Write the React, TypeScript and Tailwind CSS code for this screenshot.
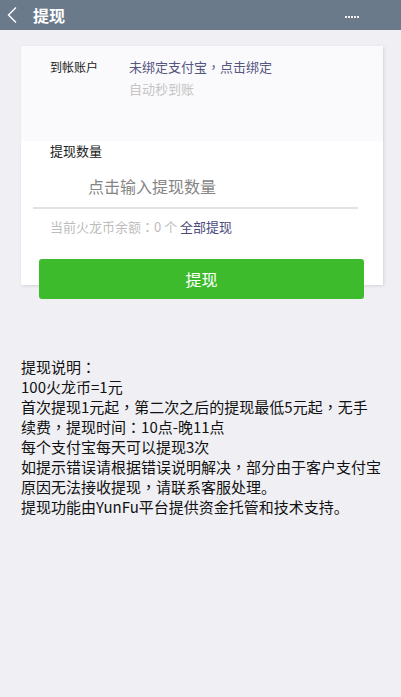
import { useState } from 'react';

// full-width punctuation sits centred in the reference, as in the TC font
function P({ children }: { children: string }) {
  return <span className="font-['Noto_Sans_CJK_TC',sans-serif]">{children}</span>;
}

export default function App() {
  const [amount, setAmount] = useState('');

  return (
    <div className="min-h-[697px] bg-[#efeff4] font-['Noto_Sans_CJK_SC','Noto_Sans',sans-serif] text-[#222]">
      {/* Header */}
      <div className="flex h-[30px] items-center bg-[#6b7a8a] text-white">
        <svg width="12" height="18" viewBox="0 0 12 18" className="ml-[6px]" fill="none">
          <path d="M10 1.5 L2.5 9 L10 16.5" stroke="#fff" strokeWidth="1.4" />
        </svg>
        <span className="ml-[15px] text-[16px] font-bold leading-none">提现</span>
        <span className="ml-auto mr-[42px] mt-[4px] flex gap-[1px]">
          <span className="h-[2px] w-[2px] bg-white/90" />
          <span className="h-[2px] w-[2px] bg-white/90" />
          <span className="h-[2px] w-[2px] bg-white/90" />
          <span className="h-[2px] w-[2px] bg-white/90" />
          <span className="h-[2px] w-[2px] bg-white/90" />
        </span>
      </div>

      <div className="px-[21px] pt-[16px]">
        {/* Card */}
        <div className="w-[362px] bg-white pb-[48px] shadow-[1px_1px_3px_rgba(0,0,0,0.12)]">
          <div className="flex h-[95px] bg-[#fafafc] pl-[29px] pt-[10px]">
            <div className="w-[79px] text-[12px] leading-[22px]">到帐账户</div>
            <div className="text-[13px] leading-[22px]">
              <div className="text-[#55557f]">未绑定支付宝<P>，</P>点击绑定</div>
              <div className="text-[#c4c4c4]">自动秒到账</div>
            </div>
          </div>

          <div className="pl-[29px] text-[13px] leading-[20px]">提现数量</div>
          <div className="ml-[12px] mr-[25px] flex h-[48px] items-center border-b-2 border-[#e2e2e6] pl-[55px] pt-[4px]">
            <input
              value={amount}
              onChange={(e) => setAmount(e.target.value)}
              placeholder="点击输入提现数量"
              className="w-full bg-transparent text-[16px] outline-none placeholder:text-[#858585]"
            />
          </div>
          <div className="mt-[8px] pl-[29px] text-[13px] leading-[20px] text-[#bdbdbd]">
            当前火龙币余额<P>：</P>0 个 <span className="text-[#4a4a7c]">全部提现</span>
          </div>
        </div>

        <button className="relative -mt-[26px] ml-[18px] flex h-[40px] w-[325px] items-center justify-center rounded-[3px] bg-[#3dbb2d] text-[16px] text-white">
          提现
        </button>

        {/* Notes */}
        <div className="mt-[58px] text-[15px] leading-[20px] text-[#111]">
          <div>提现说明<P>：</P></div>
          <div>100火龙币=1元</div>
          <div>首次提现1元起<P>，</P>第二次之后的提现最低5元起<P>，</P>无手</div>
          <div>续费<P>，</P>提现时间<P>：</P>10点-晚11点</div>
          <div>每个支付宝每天可以提现3次</div>
          <div className="whitespace-nowrap">如提示错误请根据错误说明解决<P>，</P>部分由于客户支付宝</div>
          <div>原因无法接收提现<P>，</P>请联系客服处理。</div>
          <div>提现功能由YunFu平台提供资金托管和技术支持。</div>
        </div>
      </div>
    </div>
  );
}
